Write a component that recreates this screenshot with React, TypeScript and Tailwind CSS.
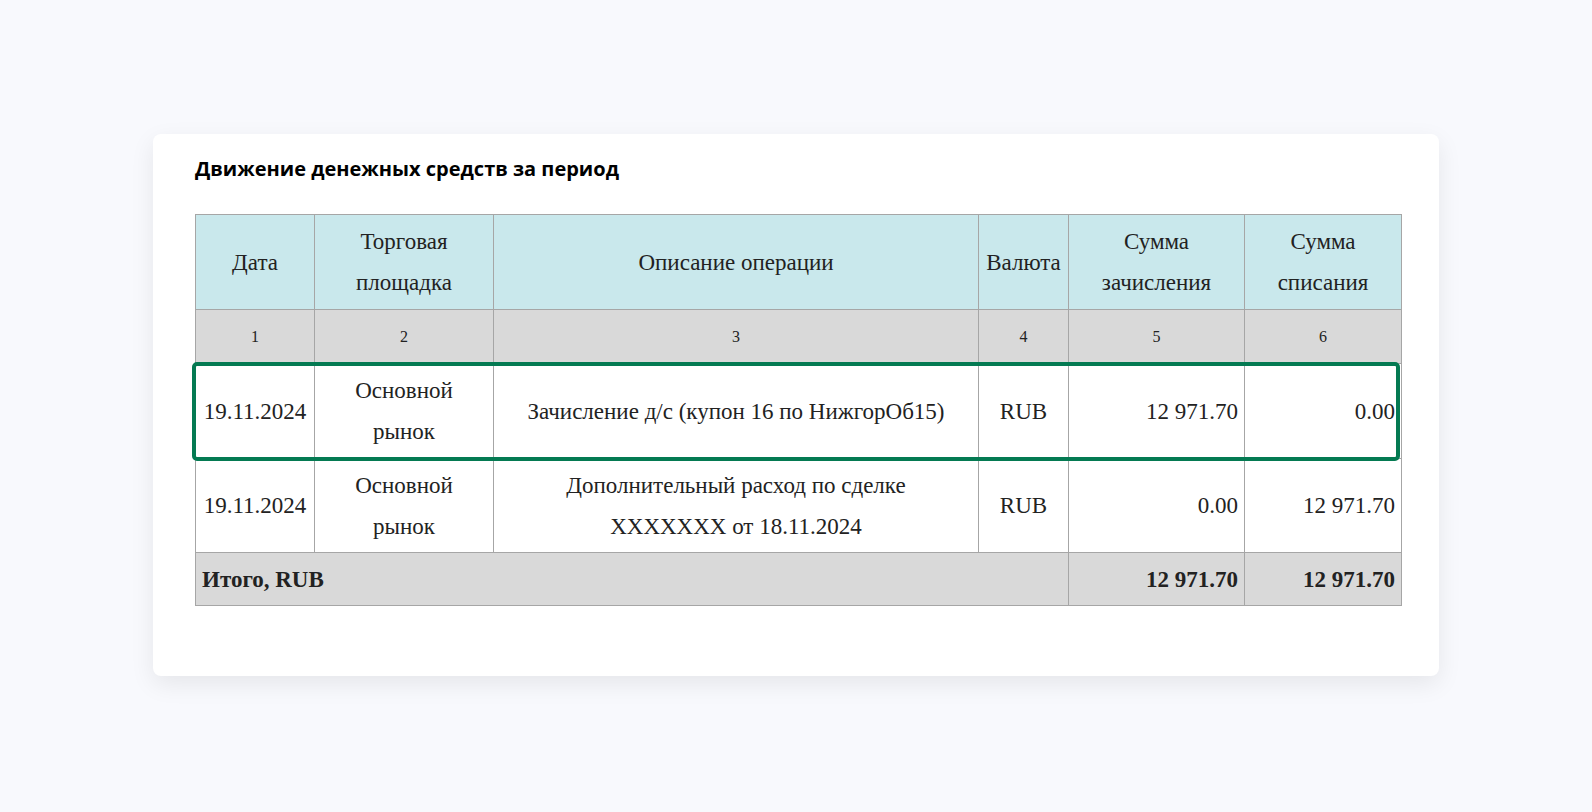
export default function App() {
  const b = "border border-[#a6a6a6]";
  const serif = { fontFamily: '"Liberation Serif", "Times New Roman", serif' };
  return (
    <div className="w-[1592px] h-[812px] bg-[#f8f9fd] pt-[134px] pl-[153px]">
      <div className="w-[1286px] h-[542px] bg-white rounded-lg shadow-[0_8px_24px_rgba(0,0,0,0.08)] pt-[21px] pl-[42px]">
        <div className="text-[20px] font-bold text-black leading-[28px]" style={{ fontFamily: '"Open Sans", "Noto Sans", sans-serif' }}>
          Движение денежных средств за период
        </div>
        <div className="relative mt-[31px] w-[1206px]">
          <table className="border-collapse text-[#222] text-[23px] leading-[41px] table-fixed w-[1206px]" style={serif}>
            <colgroup>
              <col style={{ width: 119 }} /><col style={{ width: 179 }} /><col style={{ width: 485 }} />
              <col style={{ width: 90 }} /><col style={{ width: 176 }} /><col style={{ width: 157 }} />
            </colgroup>
            <tbody>
              <tr className="bg-[#c9e8ec] h-[95px] text-center">
                <td className={b}>Дата</td>
                <td className={b}>Торговая<br />площадка</td>
                <td className={b}>Описание операции</td>
                <td className={`${b} whitespace-nowrap`}>Валюта</td>
                <td className={b}>Сумма<br />зачисления</td>
                <td className={b}>Сумма<br />списания</td>
              </tr>
              <tr className="bg-[#d9d9d9] h-[54px] text-center text-[16px]">
                {[1, 2, 3, 4, 5, 6].map((n) => <td key={n} className={b}>{n}</td>)}
              </tr>
              <tr className="h-[95px] text-center">
                <td className={`${b} whitespace-nowrap`}>19.11.2024</td>
                <td className={b}>Основной<br />рынок</td>
                <td className={b}>Зачисление д/с (купон 16 по НижгорОб15)</td>
                <td className={b}>RUB</td>
                <td className={`${b} text-right pr-[6px]`}>12 971.70</td>
                <td className={`${b} text-right pr-[6px]`}>0.00</td>
              </tr>
              <tr className="h-[94px] text-center">
                <td className={`${b} whitespace-nowrap`}>19.11.2024</td>
                <td className={b}>Основной<br />рынок</td>
                <td className={b}>Дополнительный расход по сделке<br />XXXXXXX от 18.11.2024</td>
                <td className={b}>RUB</td>
                <td className={`${b} text-right pr-[6px]`}>0.00</td>
                <td className={`${b} text-right pr-[6px]`}>12 971.70</td>
              </tr>
              <tr className="h-[53px] bg-[#d9d9d9] font-bold">
                <td className={`${b} pl-[6px]`} colSpan={4}>Итого, RUB</td>
                <td className={`${b} text-right pr-[6px]`}>12 971.70</td>
                <td className={`${b} text-right pr-[6px]`}>12 971.70</td>
              </tr>
            </tbody>
          </table>
          <div className="absolute left-[-3px] top-[148px] w-[1208px] h-[99px] border-4 border-[#047a52] rounded-[5px] pointer-events-none" />
        </div>
      </div>
    </div>
  );
}
